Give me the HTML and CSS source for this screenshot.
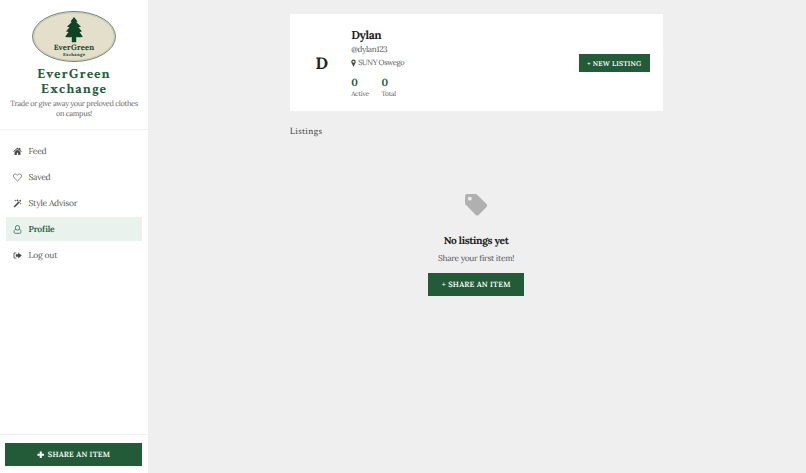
FILE: index.html
```html
<!DOCTYPE html>
<html lang="en">
<head>
  <meta charset="UTF-8">
  <meta name="viewport" content="width=device-width, initial-scale=1.0">
  <title>EverGreen Exchange</title>
  <link rel="stylesheet" href="styles.css">
</head>
<body>

<aside class="sidebar">
  <div class="brand">
    <svg class="logo" viewBox="0 0 84 51">
      <ellipse cx="42" cy="25.5" rx="41.5" ry="25" fill="#e4dfca" stroke="#506a58" stroke-width="0.8"/>
      <ellipse cx="42" cy="25.5" rx="40.2" ry="23.8" fill="none" stroke="#b3b8a3" stroke-width="0.6"/>
      <path fill="#0c4425" d="M42 6l3.500 4.500-1.300.5 4.800 4.800-2.500.4 3.500 4.300-2.500.5 3.300 4.700c-2.300.7-4.600.7-6.600.2v5.300h-4.400v-5.300c-2 .5-4.300.5-6.600-.2l3.300-4.700-2.500-.5 3.500-4.300-2.500-.4 4.800-4.800-1.300-.5z"/>
      <text class="logo-name" x="42" y="39.300" textLength="40.500">EverGreen</text>
      <text class="logo-sub" x="42" y="44.800" textLength="22">Exchange</text>
    </svg>
    <h1>EverGreen Exchange</h1>
    <p>Trade or give away your preloved clothes <span>on campus!</span></p>
  </div>

  <nav class="menu">
    <a class="feed">
      <svg viewBox="0 0 16 16"><path d="M8 1L.4 7.800l1 1.200L8 3.200 14.600 9l1-1.200-2.600-2.300V1.800h-2.200v1.700zM8 4.500L2.800 9.100V14h4v-3.700h2.400V14h4V9.100z"/></svg>
      <span>Feed</span>
    </a>
    <a class="saved">
      <svg class="outline" viewBox="0 0 16 16"><path d="M8 14.200L2 8.400C-.8 5.200 1 1.800 4.200 1.800 6 1.800 7.200 3 8 4c.8-1 2-2.200 3.800-2.200 3.200 0 5 3.400 2.200 6.600z"/></svg>
      <span>Saved</span>
    </a>
    <a class="advisor">
      <svg viewBox="0 0 16 16"><path d="M1 13.200L12.800 1.400l2 2L3 15.200zM10.500 4.900l.9.900 1.900-1.900-.9-.9z" fill-rule="evenodd"/><path d="M4 .8l.5 1.500 1.500.5-1.500.5L4 4.800l-.5-1.500L2 2.800l1.500-.5zM8 0l.7 1.900 1.900.6-1.900.7L8 5l-.7-1.800-1.900-.7 1.900-.6zM13.500 6.500l.5 1.400 1.500.5-1.500.5-.5 1.500-.5-1.500-1.500-.5 1.500-.5z"/></svg>
      <span>Style Advisor</span>
    </a>
    <a class="profile active">
      <svg class="outline" viewBox="0 0 16 16"><ellipse cx="8" cy="5" rx="3.700" ry="4.200"/><path d="M4.700 7.500C2.500 8 1.900 10 1.900 12c0 1.800.9 2.800 2.100 2.800h8c1.200 0 2.100-1 2.100-2.800 0-2-.6-4-2.800-4.500"/></svg>
      <span>Profile</span>
    </a>
    <a class="logout">
      <svg viewBox="0 0 16 16"><path d="M6 2.500H3.500C2 2.500 1 3.500 1 5v6c0 1.500 1 2.500 2.500 2.500H6V12H3.700c-.7 0-1.200-.5-1.200-1.200V5.200C2.500 4.500 3 4 3.700 4H6zM9.300 2.500v3.200H5v4.600h4.300v3.200L15.500 8z"/></svg>
      <span>Log out</span>
    </a>
  </nav>

  <div class="sidebar-footer">
    <button class="btn btn-wide">
      <svg viewBox="0 0 8 8"><path d="M2.900.5h2.200v2.400h2.400v2.200H5.100v2.400H2.900V5.100H.5V2.900h2.400z"/></svg>
      <span>SHARE AN ITEM</span>
    </button>
  </div>
</aside>

<main class="content">
  <section class="profile-card">
    <div class="avatar">D</div>
    <div class="info">
      <h2>Dylan</h2>
      <p class="handle">@dylan123</p>
      <p class="location">
        <svg viewBox="0 0 10 16"><path fill-rule="evenodd" d="M5 1a4.500 4.500 0 0 0-4.500 4.500c0 1 .2 1.600.6 2.400L5 15.500l3.900-7.600c.4-.8.6-1.400.6-2.400A4.500 4.500 0 0 0 5 1zm0 2.500a2 2 0 1 1 0 4 2 2 0 0 1 0-4z"/></svg>
        <span>SUNY Oswego</span>
      </p>
      <div class="stats">
        <div class="stat"><strong>0</strong><span>Active</span></div>
        <div class="stat"><strong>0</strong><span>Total</span></div>
      </div>
    </div>
    <button class="btn btn-small">+ NEW LISTING</button>
  </section>

  <h3 class="section-title">Listings</h3>

  <section class="empty">
    <svg viewBox="0 0 24 24"><path fill-rule="evenodd" d="M1 3a2 2 0 0 1 2-2h7.500c1 0 2 .5 2.700 1.200l8.400 8.400a2 2 0 0 1 0 2.800l-7.500 7.600a2 2 0 0 1-2.800 0l-8.600-8.700A4 4 0 0 1 1 9.800zm4.600.6a1.800 1.800 0 1 0 0 3.600 1.800 1.800 0 0 0 0-3.600z"/></svg>
    <h4>No listings yet</h4>
    <p>Share your first item!</p>
    <button class="btn btn-share">+ SHARE AN ITEM</button>
  </section>
</main>

</body>
</html>
```
FILE: styles.css
```css
* {
  box-sizing: border-box;
  margin: 0;
  padding: 0;
}
body {
  display: flex;
  height: 473px;
  background: #efefef;
  color: #555;
  font-family: Lora, "Liberation Serif", serif;
  text-rendering: geometricPrecision;
  white-space: nowrap;
  overflow: hidden;
}

/* Sidebar */
.sidebar {
  display: flex;
  flex-direction: column;
  flex: none;
  width: 148px;
  background: #fff;
}
.brand {
  height: 130px;
  padding-top: 11px;
  border-bottom: 1px solid #efefef;
  text-align: center;
}
.logo {
  display: block;
  width: 84px;
  height: 51px;
  margin: 0 auto;
}
.logo text {
  fill: #0f4528;
  font-weight: bold;
  text-anchor: middle;
}
.logo-name {
  font-size: 7.7px;
}
.logo-sub {
  font-size: 4.3px;
}
.brand h1 {
  width: 90px;
  margin: 5px auto 0;
  color: #235b39;
  font-family: "Crimson Text", "Liberation Serif", serif;
  font-size: 14px;
  line-height: 15px;
  letter-spacing: 1px;
  white-space: normal;
}
.brand p {
  margin-top: 3px;
  color: #666;
  font-size: 7.4px;
  line-height: 10px;
  letter-spacing: -0.34px;
}
.brand p span {
  display: block;
}
.menu {
  display: flex;
  flex-direction: column;
  flex: 1;
  gap: 2px;
  padding: 9px 6px 0 5.5px;
}
.menu a {
  display: flex;
  align-items: center;
  gap: 6.5px;
  height: 24px;
  padding-left: 7.5px;
  font-size: 8.5px;
  letter-spacing: -0.2px;
}
.menu span {
  padding-top: 1px;
}
.menu svg {
  width: 9px;
  height: 9px;
  fill: #484848;
}
.menu .outline {
  fill: none;
  stroke: #555;
  stroke-width: 1.3;
}
.menu .active {
  background: #eaf2ee;
  color: #235b39;
  font-weight: 600;
}
.menu .active svg {
  stroke: #235b39;
}
.sidebar-footer {
  height: 39px;
  padding: 8px 6px 0 5.4px;
  border-top: 1px solid #efefef;
}
.btn {
  display: flex;
  align-items: center;
  justify-content: center;
  background: #235b39;
  border: 0;
  color: #fff;
  font-family: inherit;
  font-weight: 600;
  text-rendering: inherit;
  letter-spacing: 0.2px;
}
.btn-wide {
  gap: 3px;
  width: 136.6px;
  height: 23px;
  font-size: 7.6px;
}
.btn-wide svg {
  width: 7.5px;
  height: 7.5px;
  fill: #fff;
}

/* Profile page */
.content {
  width: 373px;
  margin: 14px 0 0 141.7px;
}
.profile-card {
  display: flex;
  align-items: center;
  height: 97px;
  padding: 0 13px;
  background: #fff;
}
.avatar {
  width: 38px;
  padding-top: 1px;
  color: #222;
  font-size: 16.5px;
  font-weight: bold;
  text-align: center;
}
.info {
  flex: 1;
  padding: 2px 0 0 10.5px;
}
.info h2 {
  color: #222;
  font-size: 11.5px;
  line-height: 16px;
  letter-spacing: -0.35px;
}
.handle {
  font-size: 8.2px;
  line-height: 13px;
  letter-spacing: -0.3px;
}
.location {
  display: flex;
  align-items: center;
  gap: 2px;
  height: 12px;
  font-size: 7.5px;
  letter-spacing: -0.38px;
}
.location svg {
  width: 5px;
  height: 8px;
  fill: #444;
}
.stats {
  display: flex;
  gap: 12.5px;
  margin-top: 7px;
}
.stat strong {
  display: block;
  color: #235b39;
  font-size: 10.4px;
  line-height: 13px;
}
.stat span {
  display: block;
  font-size: 6.6px;
  line-height: 10px;
  letter-spacing: -0.2px;
}
.btn-small {
  width: 71px;
  height: 18px;
  padding-top: 1px;
  font-size: 6.9px;
}
.section-title {
  margin-top: 14px;
  color: #444;
  font-family: "Crimson Text", "Liberation Serif", serif;
  font-size: 9.8px;
  font-weight: normal;
  line-height: 14px;
  letter-spacing: 0.25px;
}

/* Empty state */
.empty {
  display: flex;
  flex-direction: column;
  align-items: center;
  padding-top: 54px;
}
.empty svg {
  width: 25px;
  height: 25px;
  fill: #b0b0b0;
}
.empty h4 {
  margin-top: 15px;
  color: #222;
  font-size: 10.2px;
  line-height: 16px;
  letter-spacing: -0.35px;
}
.empty p {
  margin-top: 3px;
  font-size: 8.4px;
  line-height: 14px;
  letter-spacing: -0.3px;
}
.btn-share {
  width: 96px;
  height: 23px;
  margin-top: 7px;
  font-size: 7.6px;
}
```
